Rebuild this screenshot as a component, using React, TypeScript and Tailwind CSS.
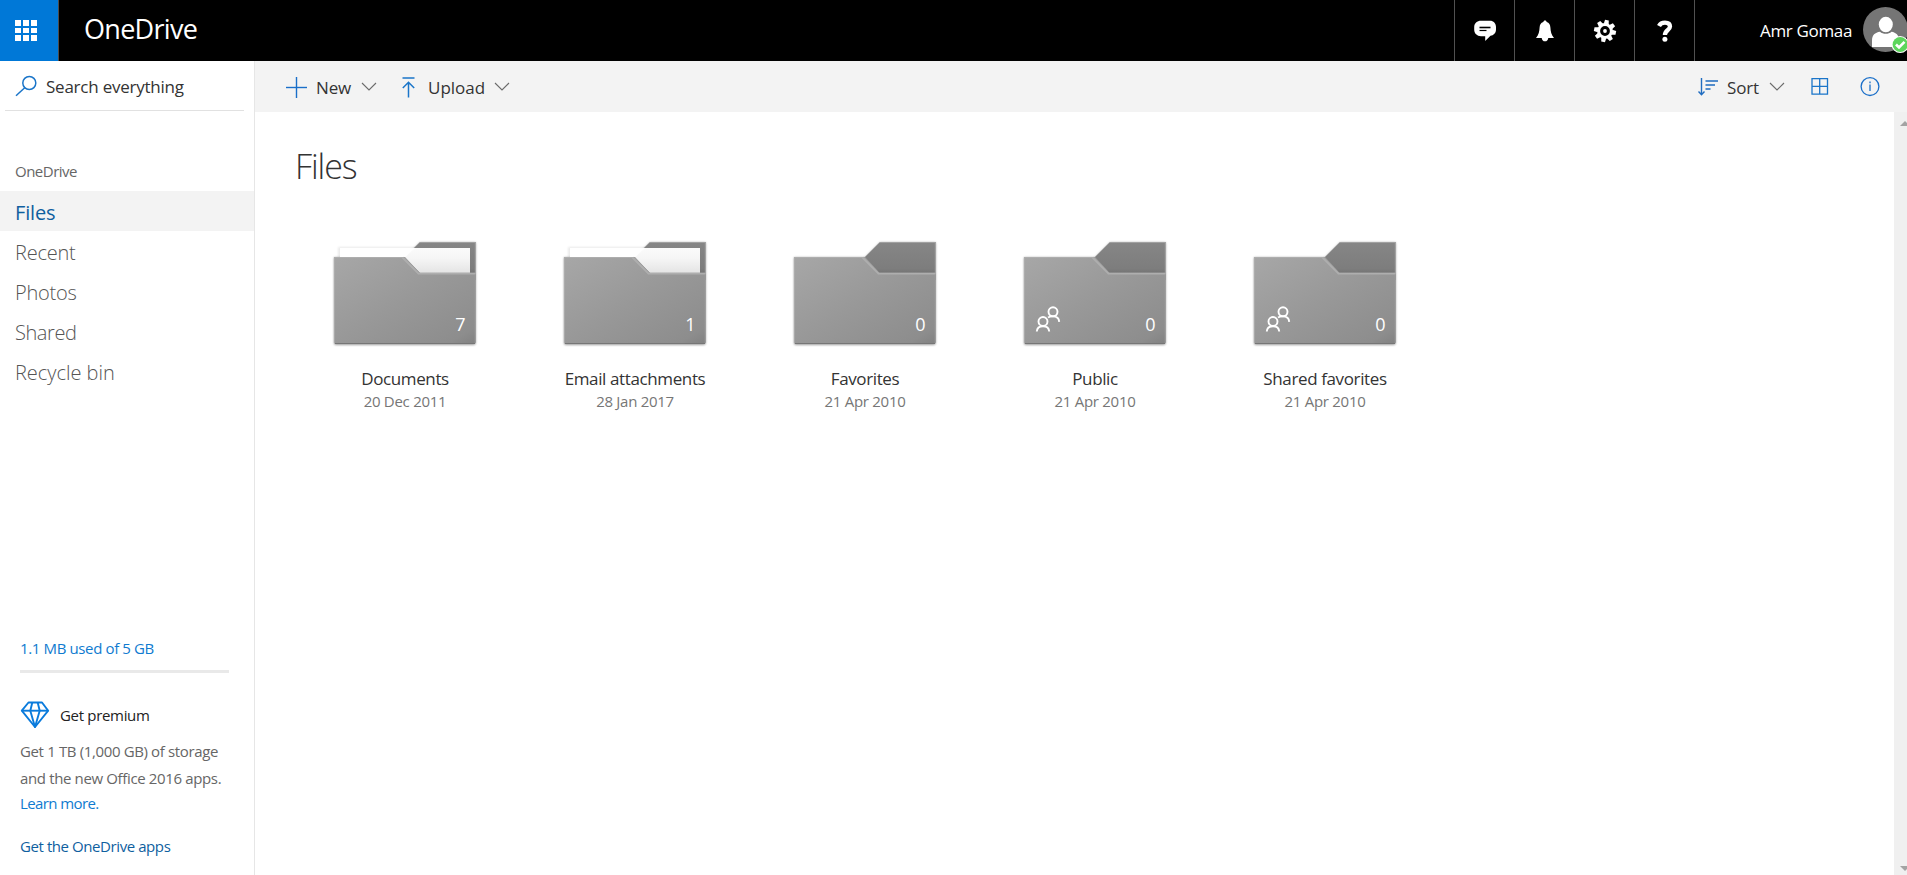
import React from 'react';

const NAV = [
  { label: 'Recent', track: 'tracking-[-0.23px]' },
  { label: 'Photos', track: 'tracking-[-0.23px]' },
  { label: 'Shared', track: 'tracking-[-0.42px]' },
  { label: 'Recycle bin', track: 'tracking-[-0.03px]' },
];

const FOLDERS = [
  { name: 'Documents', date: '20 Dec 2011', count: 7, filled: true, shared: false },
  { name: 'Email attachments', date: '28 Jan 2017', count: 1, filled: true, shared: false },
  { name: 'Favorites', date: '21 Apr 2010', count: 0, filled: false, shared: false },
  { name: 'Public', date: '21 Apr 2010', count: 0, filled: false, shared: true },
  { name: 'Shared favorites', date: '21 Apr 2010', count: 0, filled: false, shared: true },
];

function Chevron({ className = '' }: { className?: string }) {
  return (
    <svg className={`mb-[2px] ${className}`} width="16" height="9" viewBox="0 0 16 9" fill="none" stroke="#6b6b6b" strokeWidth="1.1">
      <path d="M1 1 L8 8 L15 1" />
    </svg>
  );
}

function HeaderButton({ children }: { children: React.ReactNode }) {
  return <button className="flex h-[61px] w-[60px] items-center justify-center border-l border-[#515151]">{children}</button>;
}

function ChatIcon() {
  return (
    <svg width="24" height="24" viewBox="0 0 24 24">
      <path d="M8 1.700H17C20.500 1.700 23 4.300 23 7.900V10.500C23 14 20.500 16.500 17.500 16.800L12.200 22V17.200H8C4 17.200 1.200 14.500 1.200 10.800V8.200C1.200 4.300 4 1.700 8 1.700Z" fill="#fff" />
      <path d="M6.500 8.500H17.500" stroke="#000" strokeWidth="1.600" />
      <path d="M6.500 11.500H13.500" stroke="#000" strokeWidth="1.200" />
    </svg>
  );
}

function BellIcon() {
  return (
    <svg width="24" height="24" viewBox="0 0 24 24" fill="#fff">
      <path d="M12 1.500C13 1.500 13.500 2.200 13.700 3C16.200 3.800 17.200 5.800 17.400 8.500C17.600 12.500 18.200 15.500 21 18.900H15.300C14.900 21 13.800 22.300 12 22.300C10.200 22.300 9.100 21 8.700 18.900H3C5.800 15.500 6.400 12.500 6.600 8.500C6.800 5.800 7.800 3.800 10.300 3C10.500 2.200 11 1.500 12 1.500Z" />
    </svg>
  );
}

function GearIcon() {
  return (
    <svg width="24" height="24" viewBox="-12 -12 24 24">
      <g fill="#fff">
        {[0, 45, 90, 135, 180, 225, 270, 315].map((a) => (
          <path key={a} d="M-2.500 -7L-1.900 -11H1.900L2.500 -7Z" transform={`rotate(${a + 10})`} />
        ))}
      </g>
      <circle r="6.400" fill="none" stroke="#fff" strokeWidth="3" />
      <circle r="1.900" fill="#fff" />
    </svg>
  );
}

function HelpIcon() {
  return (
    <svg width="24" height="24" viewBox="0 0 24 24" fill="none" stroke="#fff">
      <path d="M6 7C7.200 4.600 9.200 3.700 12 3.700C15.200 3.700 17 5.200 17 7.600C17 11.200 11.900 10.800 11.900 16" strokeWidth="4.300" />
      <circle cx="11.900" cy="20.200" r="2.500" fill="#fff" stroke="none" />
    </svg>
  );
}

function Avatar() {
  return (
    <svg className="shrink-0" width="45" height="48" viewBox="0 0 45 48">
      <circle cx="22.500" cy="22.500" r="22.500" fill="#757575" />
      <ellipse cx="22.800" cy="17.500" rx="7" ry="7.800" fill="#fff" />
      <path d="M9 40V34C9 28 12 25.500 17 24.800C20 27.500 25.500 27.500 28.500 24.800C33 25.500 36 28 36 34V40Z" fill="#fff" />
      <circle cx="37.200" cy="37.500" r="8.600" fill="#fff" />
      <circle cx="37.200" cy="37.500" r="7.600" fill="#5cd65c" />
      <path d="M33 37.500L36 40.500L41.500 34.800" fill="none" stroke="#fff" strokeWidth="2.600" />
    </svg>
  );
}

function Folder({ filled, shared, count }: { filled: boolean; shared: boolean; count: number }) {
  return (
    <div className="relative h-[110px] w-[150px]">
      <svg width="150" height="110" viewBox="0 0 150 110">
        <defs>
          <linearGradient id="front" x1="0" y1="0" x2="1" y2="1">
            <stop offset="0" stopColor="#a7a7a7" />
            <stop offset="0.500" stopColor="#989898" />
            <stop offset="0.900" stopColor="#8d8d8d" />
            <stop offset="1" stopColor="#818181" />
          </linearGradient>
          <linearGradient id="back" x1="0" y1="0" x2="0" y2="1">
            <stop offset="0" stopColor="#868686" />
            <stop offset="0.700" stopColor="#7d7d7d" />
            <stop offset="0.850" stopColor="#727272" />
          </linearGradient>
          <linearGradient id="paper" x1="0" y1="0" x2="0" y2="1">
            <stop offset="0" stopColor="#fbfbfb" />
            <stop offset="0.400" stopColor="#f6f6f6" />
            <stop offset="1" stopColor="#e4e4e4" />
          </linearGradient>
          <filter id="soft" x="-10%" y="-10%" width="120%" height="120%">
            <feGaussianBlur stdDeviation="1" />
          </filter>
        </defs>
        <path d="M4 17.500H75L90 2.500H145.700V103Q145.700 105 143.700 105H6Q4 105 4 103Z" fill="#000" opacity="0.400" filter="url(#soft)" />
        {filled && <path d="M8 7H90V18H8Z" fill="#000" opacity="0.080" filter="url(#soft)" />}
        <path d="M75 17L90 2H145.700V40H75Z" fill="url(#back)" />
        <path d="M90 2.500H145.300V34" fill="none" stroke="#a8a8a8" strokeWidth="0.800" />
        {filled && <path d="M10 8H140V33H90L75 17.500H10Z" fill="url(#paper)" />}
        {filled && <path d="M10 8H85L75 17.500H10Z" fill="#fff" />}
        <path d="M4 17H75L89.500 32.700H145.700V102Q145.700 104 143.700 104H6Q4 104 4 102Z" fill="url(#front)" />
        <path d="M72.500 17.500L88.500 33.700H145.700" fill="none" stroke="#aeaeae" strokeWidth="1.800" />
        <path d="M4.400 103V17.500H73" fill="none" stroke="#b0b0b0" strokeWidth="0.800" />
        <path d="M145.200 34V103" stroke="#a0a0a0" strokeWidth="0.800" />
        <path d="M5 103.500H145" stroke="#767676" strokeWidth="1" />
        {shared && (
          <g fill="none" stroke="#fff" strokeWidth="1.900" transform="translate(10 0)">
            <circle cx="13" cy="81.500" r="4.500" />
            <circle cx="23" cy="71.800" r="4.500" />
            <path d="M6.800 91.500C7 88.200 9.500 86.200 13 86.200C16.500 86.200 19 88.200 19.200 91.500" />
            <path d="M18 77.500C19.300 76.700 21 76.400 23 76.400C26.500 76.400 29 78.500 29.200 81.900" />
          </g>
        )}
      </svg>
      <span className="absolute right-[14.500px] top-[72px] text-[18px] leading-[24px] text-white">{count}</span>
    </div>
  );
}

export default function App() {
  return (
    <div className="flex h-[875px] w-full flex-col overflow-hidden bg-white font-['Open_Sans','Noto_Sans',sans-serif] text-[#333333]">
      <header className="flex h-[61px] shrink-0 overflow-hidden bg-black text-white">
        <button className="grid h-[61px] w-[59px] grid-cols-[6px_6px_6px] content-center gap-[2px] border-r border-[#4d4d4d] bg-[#0078d7] pl-[15px]">
          {Array.from({ length: 9 }, (_, i) => (
            <span key={i} className="h-[5.500px] w-[6px] bg-white" />
          ))}
        </button>
        <span className="ml-[25px] grow text-[27px] leading-[58px] tracking-[-0.7px]">OneDrive</span>
        <HeaderButton><ChatIcon /></HeaderButton>
        <HeaderButton><BellIcon /></HeaderButton>
        <HeaderButton><GearIcon /></HeaderButton>
        <HeaderButton><HelpIcon /></HeaderButton>
        <div className="flex w-[213px] border-l border-[#515151] pl-[65px]">
          <span className="w-[103px] shrink-0 whitespace-nowrap text-[17px] leading-[62px] tracking-[-0.33px]">Amr Gomaa</span>
          <div className="pt-[7px]"><Avatar /></div>
        </div>
      </header>

      <div className="flex min-h-0 flex-1">
        <aside className="flex w-[255px] shrink-0 flex-col border-r border-[#e6e6e6]">
          <div className="ml-[5px] flex h-[50px] w-[239px] items-center border-b border-[#e1e1e1] pl-[10px] pt-[1px]">
            <svg width="23" height="22" viewBox="0 0 23 22" fill="none" stroke="#1a75c9" strokeWidth="1.500">
              <circle cx="14.300" cy="8" r="6.500" />
              <path d="M9.700 12.700L1 20.800" />
            </svg>
            <span className="ml-[8px] pt-[2px] text-[17px] leading-[24px] tracking-[-0.23px]">Search everything</span>
          </div>
          <div className="pl-[15px] pt-[40px] text-[15px] leading-[40px] tracking-[-0.51px] text-[#666666]">OneDrive</div>
          <nav className="text-[20px] leading-[40px]">
            <div className="h-[40px] bg-[#f3f3f3] pl-[15px] pt-[2px] tracking-[-0.16px] text-[#0f5f9f]">Files</div>
            {NAV.map((n) => (
              <div key={n.label} className={`h-[40px] pl-[15px] pt-[2px] font-light text-[#555555] ${n.track}`}>{n.label}</div>
            ))}
          </nav>
          <div className="mt-auto flex flex-col pb-[19px] pl-[20px] text-[15px] text-[#666666]">
            <span className="leading-[20px] tracking-[-0.37px] text-[#0f7bd0]">1.1 MB used of 5 GB</span>
            <div className="mt-[12px] h-[3px] w-[209px] bg-[#e9e9e9]" />
            <div className="mt-[28px] flex h-[27px] items-center">
              <svg width="30" height="28" viewBox="0 0 30 28" fill="none" stroke="#0a7bdc" strokeWidth="1.900" strokeLinejoin="round">
                <path d="M8.500 1.500H22L28.200 9.700L15 26L1.800 9.700Z" />
                <path d="M1.800 9.700H28.200" />
                <path d="M12.300 1.500L10.300 9.700L15 26L19.700 9.700L17.700 1.500" />
              </svg>
              <span className="ml-[10px] pt-[1px] font-medium tracking-[-0.32px] text-[#222222]">Get premium</span>
            </div>
            <p className="mt-[10px] whitespace-nowrap leading-[27px] tracking-[-0.36px]">
              Get 1 TB (1,000 GB) of storage<br />and the new Office 2016 apps.
            </p>
            <span className="mt-[-1px] leading-[25px] tracking-[-0.600px] text-[#0f7bd0]">Learn more.</span>
            <span className="mt-[20px] leading-[20px] tracking-[-0.42px] text-[#0f5f9f]">Get the OneDrive apps</span>
          </div>
        </aside>

        <section className="flex min-w-0 flex-1 flex-col">
          <div className="flex h-[51px] shrink-0 items-center bg-[#f3f3f3] pl-[31px] pr-[27px] pt-[1px] text-[17px]">
            <svg width="21" height="21" viewBox="0 0 21 21" stroke="#1a6fc9">
              <path d="M10.500 0V21" strokeWidth="1.400" />
              <path d="M0 10.500H21" strokeWidth="1.400" />
            </svg>
            <span className="ml-[9px] pt-[1px] tracking-[-0.17px]">New</span>
            <Chevron className="ml-[10px]" />
            <svg className="ml-[24px]" width="15" height="21" viewBox="0 0 15 21" fill="none" stroke="#1a75c9" strokeWidth="1.500">
              <path d="M1.500 1H13.500" />
              <path d="M7.500 20.500V5.500M1.800 11L7.500 5.200L13.200 11" />
            </svg>
            <span className="ml-[12px] pt-[1px]">Upload</span>
            <Chevron className="ml-[9px]" />
            <div className="ml-auto flex items-center">
              <svg width="20" height="20" viewBox="0 0 20 20" fill="none" stroke="#1f6cc0" strokeWidth="1.400">
                <path d="M3.500 1V17.500M0.500 14.500L3.500 17.700L6.500 14.500" />
                <path d="M7.500 4H20M7.500 8H17M7.500 12H12.500" />
              </svg>
              <span className="ml-[9px] pt-[1px] tracking-[-0.17px]">Sort</span>
              <Chevron className="ml-[10px]" />
              <svg className="ml-[26px]" width="18" height="18" viewBox="0 0 18 18" fill="none" stroke="#1a75c9" strokeWidth="1.300">
                <path d="M1 0.700H16.500V16.200H1ZM8.700 0.700V16.200M1 8.400H16.500" />
              </svg>
              <svg className="ml-[31px]" width="20" height="20" viewBox="0 0 20 20" fill="none" stroke="#1a6fc9" strokeWidth="1.300">
                <circle cx="10" cy="9.600" r="8.900" />
                <path d="M10 7.600V14.100M10 4.600V6.200" />
              </svg>
            </div>
          </div>

          <div className="flex min-h-0 flex-1">
            <main className="flex-1 pt-[34px]">
              <h1 className="pl-[40px] text-[34px] font-light leading-[40px] tracking-[-1.100px]">Files</h1>
              <div className="flex pl-[35px] pt-[54px]">
                {FOLDERS.map((f) => (
                  <div key={f.name} className="flex w-[230px] flex-col items-center">
                    <Folder filled={f.filled} shared={f.shared} count={f.count} />
                    <span className="mt-[17px] text-[17px] leading-[24px] tracking-[-0.38px]">{f.name}</span>
                    <span className="text-[15px] leading-[20px] tracking-[-0.28px] text-[#767676]">{f.date}</span>
                  </div>
                ))}
              </div>
            </main>
            <div className="flex w-[13px] shrink-0 flex-col justify-between overflow-hidden bg-[#f0f0f0] pb-[4px] pl-[6px] pt-[9px]">
              <svg className="shrink-0" width="10" height="5" viewBox="0 0 10 5"><path d="M0 5L5 0L10 5Z" fill="#a3a3a3" /></svg>
              <svg className="shrink-0" width="10" height="5" viewBox="0 0 10 5"><path d="M0 0H10L5 5Z" fill="#a3a3a3" /></svg>
            </div>
          </div>
        </section>
      </div>
    </div>
  );
}
